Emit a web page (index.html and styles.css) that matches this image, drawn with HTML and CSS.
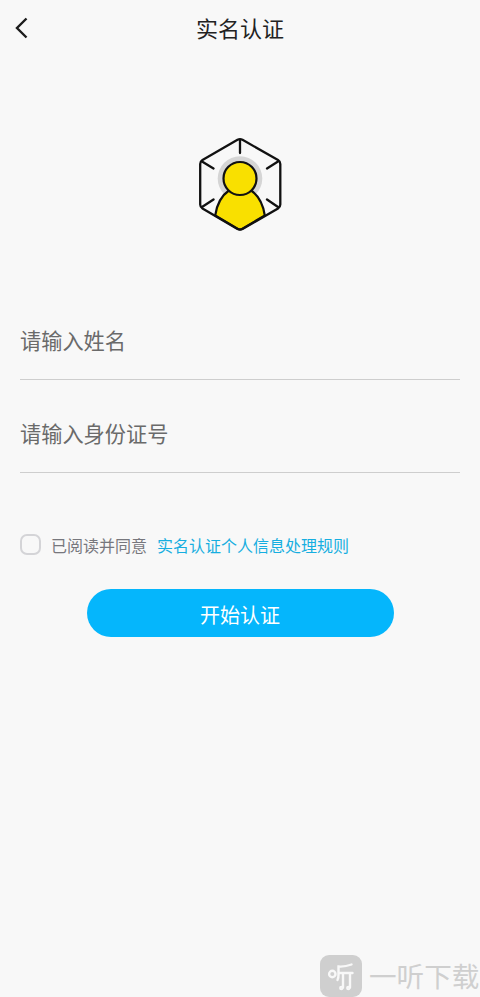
FILE: index.html
```html
<!DOCTYPE html>
<html lang="zh-CN">
<head>
<meta charset="utf-8">
<meta name="viewport" content="width=device-width, initial-scale=1">
<title>实名认证</title>
<link rel="stylesheet" href="styles.css">
</head>
<body>
<div class="page">
  <header class="bar">
    <svg class="back" width="14" height="22" viewBox="0 0 14 22"><path d="M11.500 1.500 2 11l9.500 9.500"/></svg>
    <h1 class="title">实名认证</h1>
  </header>
  <main class="content">
    <svg class="emblem" width="100" height="110" viewBox="0 0 100 110">
      <circle class="halo" cx="50" cy="48.500" r="22.300"/>
      <path class="person" d="M25.200 85.500C27 73 33 64.500 39.500 60h21C67 64.500 73 73 74.800 85.500L52.500 98.600Q50 100 47.500 98.600Z"/>
      <path class="line" d="M47.500 9.800Q50 8.500 52.500 9.800L88 30Q90.300 31.400 90.300 34V74.500Q90.300 77 88 78.400L52.500 99Q50 100.300 47.500 99L12.500 78.400Q10.200 77 10.200 74.500V34Q10.200 31.400 12.500 30Z"/>
      <path class="line" d="M50 10v13M12 31.500l11.500 7M88 31.500l-11 7M12 77l11.500-7.500M88 77l-11-7.500"/>
      <circle class="person" cx="50" cy="48.500" r="16.500"/>
    </svg>
    <div class="field">请输入姓名</div>
    <div class="field field-id">请输入身份证号</div>
    <div class="agree">
      <span class="check"></span>
      <span class="agree-text">已阅读并同意</span>
      <a class="rules">实名认证个人信息处理规则</a>
    </div>
    <button class="submit" type="button">开始认证</button>
  </main>
  <footer class="mark">
    <svg class="mark-logo" width="42" height="42" viewBox="0 0 42 42">
      <rect width="42" height="42" rx="9"/>
      <path d="M31.500 9.500Q25 12 18.500 11.500V20Q18.500 23 17.500 25M19 18H32.500M23 18V32.500M30 18V32.500"/>
      <circle cx="12.300" cy="19" r="3.200"/><circle cx="21.300" cy="33" r="1"/><circle cx="28.300" cy="33" r="1"/>
    </svg>
    <span class="mark-text">一听下载</span>
  </footer>
</div>
</body>
</html>
```
FILE: styles.css
```css
* { box-sizing: border-box; }
body {
  margin: 0;
  background: #f8f8f8;
  font-family: "Noto Sans CJK SC", sans-serif;
}
.page {
  display: flex;
  flex-direction: column;
  height: 997px;
  overflow: hidden;
}
.bar {
  display: grid;
  grid-template-columns: 40px 1fr 40px;
  align-items: center;
  height: 56px;
}
.back {
  margin-left: 15px;
  fill: none;
  stroke: #1c1c1c;
  stroke-width: 2.4;
}
.title {
  margin: 0;
  padding-bottom: 3px;
  text-align: center;
  font-size: 22px;
  line-height: 32px;
  font-weight: 400;
  color: #222;
}
.content {
  display: flex;
  flex: 1;
  flex-direction: column;
  padding: 74px 20px 0;
}
.emblem { align-self: center; }
.halo { fill: #d5d5d5; }
.person {
  fill: #f9e000;
  stroke: #111;
  stroke-width: 2.2;
}
.line {
  fill: none;
  stroke: #111;
  stroke-width: 2.3;
  stroke-linecap: round;
  stroke-linejoin: round;
}
.field {
  height: 80px;
  margin-top: 60px;
  padding-top: 24px;
  border-bottom: 1px solid #cecece;
  font-size: 21.2px;
  line-height: 31px;
  color: #6a6a6a;
}
.field-id { margin-top: 13px; }
.agree {
  display: flex;
  align-items: center;
  height: 24px;
  margin-top: 59px;
  font-size: 16px;
  line-height: 24px;
}
.check {
  width: 21px;
  height: 21px;
  border: 2px solid #d4d4d7;
  border-radius: 7px;
}
.agree-text {
  padding-top: 1px;
  margin-left: 10px;
  color: #77777d;
}
.rules {
  padding-top: 1px;
  margin-left: 10px;
  color: #16aee0;
}
.submit {
  align-self: center;
  width: 307px;
  height: 48px;
  margin-top: 33.4px;
  padding: 3px 0 0;
  border: 0;
  border-radius: 24px;
  background: #05b6fc;
  font: 400 20px/45px "Noto Sans CJK SC", sans-serif;
  color: #fff;
}
.mark {
  display: flex;
  align-items: center;
  gap: 7px;
  height: 42px;
  padding-left: 320px;
  color: #cfcfcf;
}
.mark-logo {
  flex: none;
  fill: #cfcfcf;
}
.mark-logo path,
.mark-logo circle {
  fill: none;
  stroke: #f8f8f8;
  stroke-width: 2.4;
  stroke-linecap: round;
}
.mark-text {
  padding-bottom: 2px;
  font-size: 27.6px;
  line-height: 40px;
  white-space: nowrap;
}
```
